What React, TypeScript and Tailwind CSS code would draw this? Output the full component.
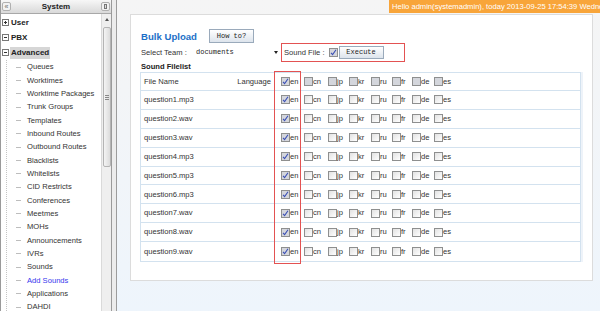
import React from "react";

const menu = [
  "Queues",
  "Worktimes",
  "Worktime Packages",
  "Trunk Groups",
  "Templates",
  "Inbound Routes",
  "Outbound Routes",
  "Blacklists",
  "Whitelists",
  "CID Restricts",
  "Conferences",
  "Meetmes",
  "MOHs",
  "Announcements",
  "IVRs",
  "Sounds",
  "Add Sounds",
  "Applications",
  "DAHDI",
];

const files = [
  "question1.mp3",
  "question2.wav",
  "question3.wav",
  "question4.mp3",
  "question5.mp3",
  "question6.mp3",
  "question7.wav",
  "question8.wav",
  "question9.wav",
];

// fixed slot widths so the boxes line up like the original table
const langs = [
  { code: "cn", w: "w-[24px]" },
  { code: "jp", w: "w-[21px]" },
  { code: "kr", w: "w-[22px]" },
  { code: "ru", w: "w-[21px]" },
  { code: "fr", w: "w-[20px]" },
  { code: "de", w: "w-[22px]" },
  { code: "es", w: "w-[22px]" },
];

function Box({ checked, dim }: { checked?: boolean; dim?: boolean }) {
  return (
    <span
      className={
        "inline-flex items-center justify-center w-[9px] h-[9px] border border-[#8e8f8f] shrink-0 " +
        (checked || dim ? "bg-[#d4d6dc]" : "bg-gradient-to-br from-[#e2e2e2] to-white")
      }
    >
      {checked && (
        <svg width="7" height="7" viewBox="0 0 7 7">
          <path d="M1 3.8 L2.6 5.6 L6 0.8" fill="none" stroke="#3a4fb5" strokeWidth="1.1" />
        </svg>
      )}
    </span>
  );
}

function TreeToggle({ plus }: { plus?: boolean }) {
  return (
    <span className="relative inline-block w-[7px] h-[7px] border border-[#777] bg-white mr-[1px] shrink-0">
      <span className="absolute left-[1px] top-[2px] w-[3px] h-px bg-[#333]" />
      {plus && <span className="absolute left-[2px] top-[1px] w-px h-[3px] bg-[#333]" />}
    </span>
  );
}

function LangRow({ header }: { header?: boolean }) {
  return (
    <div className="flex items-center">
      <div className="w-[26px] pl-[6px] flex items-center">
        <Box checked />
        <span className="text-[#333]">en</span>
      </div>
      <div className="flex items-center pl-[3px]">
        {langs.map((l) => (
          <div key={l.code} className={"flex items-center " + l.w}>
            <Box dim={header} />
            <span className="text-[#333]">{l.code}</span>
          </div>
        ))}
      </div>
    </div>
  );
}

export default function App() {
  return (
    <div className="relative w-[600px] h-[311px] overflow-hidden flex font-['Liberation_Sans',Arial,sans-serif] text-[7.6px] leading-none text-[#222] bg-white">
      {/* sidebar */}
      <aside className="w-[112px] h-full flex flex-col border-l border-r border-[#9a9a9a] bg-white">
        <div className="h-[14px] flex items-center justify-between px-[1px] bg-gradient-to-b from-[#f7f7f7] to-[#d9d9d9] border-b border-[#a8a8a8]">
          <span className="w-[9px] h-[9px] rounded-[2px] border border-[#b0b0b0] bg-[#f2f2f2] flex items-center justify-center text-[7px] text-[#666]">
            «
          </span>
          <span className="font-bold text-[8px] text-[#222]">System</span>
          <span className="w-[9px] h-[9px] rounded-[2px] border border-[#b0b0b0] bg-[#f2f2f2] flex items-center justify-center">
            <span className="w-[3px] h-[5px] border border-[#777] bg-[#ddd]" />
          </span>
        </div>
        <div className="flex-1 flex min-h-0">
          <div className="flex-1 pt-[1px]">
            <div className="h-[15px] flex items-center pl-[1px] font-bold text-[8px]">
              <TreeToggle plus />
              <span className="px-[1px]">User</span>
            </div>
            <div className="h-[15px] flex items-center pl-[1px] font-bold text-[8px]">
              <TreeToggle />
              <span className="px-[1px]">PBX</span>
            </div>
            <div className="h-[15px] flex items-center pl-[1px] font-bold text-[8px]">
              <TreeToggle />
              <span className="px-[1px] py-[2px] bg-[#d6d6d6]">Advanced</span>
            </div>
            <div className="ml-[5px] border-l border-dotted border-[#c4c4c4]">
              {menu.map((m) => (
                <div key={m} className="h-[13.33px] flex items-center pt-[1px]">
                  <span className="w-[5px] h-px bg-[#bdbdbd] ml-[9px] mr-[6px]" />
                  <span className={m === "Add Sounds" ? "text-[#3737ee]" : "text-[#333]"}>{m}</span>
                </div>
              ))}
            </div>
          </div>
          {/* scrollbar */}
          <div className="w-[10px] bg-[#efefef] border-l border-[#dadada] flex flex-col items-center">
            <div className="h-[10px] flex items-center justify-center">
              <span className="w-0 h-0 border-l-[2px] border-r-[2px] border-b-[3px] border-l-transparent border-r-transparent border-b-[#555]" />
            </div>
            <div className="mt-[3px] w-[8px] h-[140px] rounded-[2px] border border-[#b4b4b4] bg-gradient-to-r from-[#f4f4f4] to-[#dcdcdc] flex flex-col items-center justify-center gap-[1px]">
              <span className="w-[4px] h-px bg-[#888]" />
              <span className="w-[4px] h-px bg-[#888]" />
              <span className="w-[4px] h-px bg-[#888]" />
            </div>
          </div>
        </div>
      </aside>
      <div className="w-[5px] h-full bg-[#ececec] border-r border-[#9c9c9c]" />

      {/* main */}
      <main className="flex-1 h-full bg-gradient-to-b from-[#f5f5f5] to-[#eef5fc] pt-[14px] pl-[13px] pr-[7px]">
        <div className="h-[267px] bg-white border border-[#dcdcdc] pt-[14px] pl-[10px] pr-[11px]">
          <div className="flex items-center h-[14px]">
            <span className="font-bold text-[9.6px] text-[#1c6fc7] w-[68px] pt-[1px]">Bulk Upload</span>
            <span className="h-[14px] w-[45px] border border-[#9aaabb] bg-gradient-to-b from-white to-[#dde4ec] flex items-center justify-center font-['Liberation_Mono',monospace] text-[7px] text-[#222]">
              How to?
            </span>
          </div>
          <div className="flex items-center h-[19px]">
            <span className="w-[52px] text-[#333]">Select Team :</span>
            <span className="w-[88px] h-[12px] flex items-center justify-between pl-[3px] pr-[3px] font-['Liberation_Mono',monospace] text-[7px]">
              documents
              <span className="w-0 h-0 border-l-[2.5px] border-r-[2.5px] border-t-[3px] border-l-transparent border-r-transparent border-t-[#222]" />
            </span>
            <div className="h-[19px] w-[124px] border border-[#e35252] flex items-center pl-[2px]">
              <span className="text-[#333] mr-[4px]">Sound File :</span>
              <Box checked />
              <span className="ml-[1px] h-[13px] w-[45px] border border-[#9aaabb] bg-gradient-to-b from-white to-[#dde4ec] flex items-center justify-center font-['Liberation_Mono',monospace] text-[7px] text-[#222]">
                Execute
              </span>
            </div>
          </div>
          <div className="font-bold pt-[1px] h-[9px]">Sound Filelist</div>
          <div className="relative -ml-px mt-[1px] border border-[#d3e2ef] shadow-[2px_0_0_#eef3f9]">
            <div className="flex items-center h-[18px] border-b border-[#d3e2ef]">
              <div className="w-[134px] flex justify-between pl-[3px] pr-[4px] text-[#333]">
                <span>File Name</span>
                <span>Language</span>
              </div>
              <LangRow header />
            </div>
            {files.map((f, i) => (
              <div
                key={f}
                className={"flex items-center h-[18.9px] " + (i < files.length - 1 ? "border-b border-[#d3e2ef]" : "")}
              >
                <div className="w-[134px] pl-[3px] text-[#333]">{f}</div>
                <LangRow />
              </div>
            ))}
            <div className="absolute left-[133px] -top-[2px] w-[27px] h-[193px] border border-[#e35252] pointer-events-none" />
          </div>
        </div>
      </main>

      <div className="absolute right-0 top-0 w-[211px] h-[13px] bg-[#f8a53a] text-white whitespace-nowrap overflow-hidden flex items-center pl-[3px]">
        Hello admin(systemadmin), today 2013-09-25 17:54:39 Wedne
      </div>
    </div>
  );
}
